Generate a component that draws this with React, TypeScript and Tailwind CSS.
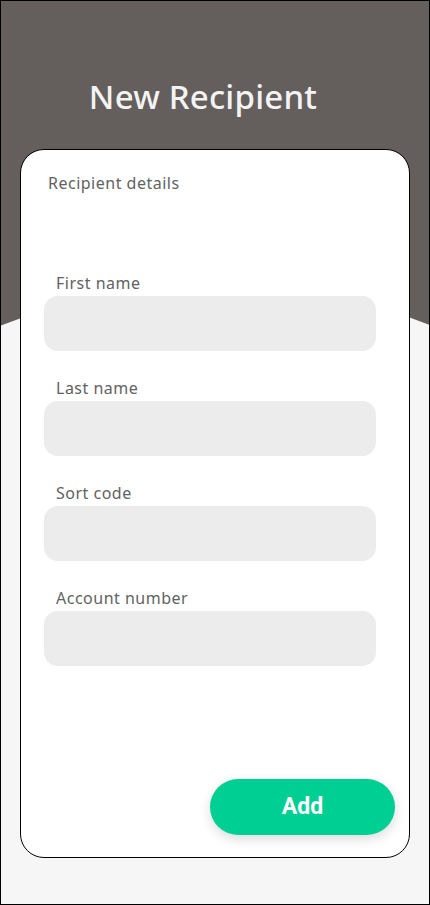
import React from 'react';

const fields = ['First name', 'Last name', 'Sort code', 'Account number'];

function Field({ label }: { label: string }) {
  return (
    <div className="flex flex-col">
      <label className="pl-[35px] mb-[3px] text-[16px] leading-5 tracking-[0.5px] text-[#626262]">{label}</label>
      <input
        type="text"
        className="ml-[23px] w-[332px] h-[55px] rounded-[14px] bg-[#ececec] outline-none px-4"
        aria-label={label}
      />
    </div>
  );
}

export default function App() {
  return (
    <div
      className="relative w-[430px] h-[905px] overflow-hidden border border-black bg-[#f6f6f6]"
      style={{ fontFamily: '"Noto Sans", "Open Sans", sans-serif' }}
    >
      {/* Header background with curved bottom */}
      <svg className="absolute left-0 top-0" width="430" height="340" viewBox="0 0 430 340">
        <path d="M-1 -1 H431 V325 Q215 239 -1 325 Z" fill="#645e5d" />
      </svg>

      <div className="relative flex flex-col">
        <h1 className="pt-[74px] h-[148px] text-center pr-[24px] text-[33px] leading-[44px] font-medium text-[#f3f3f3] tracking-[0.2px]">
          New Recipient
        </h1>

        <div className="mx-[19px] h-[709px] rounded-[24px] border border-black bg-white flex flex-col">
          <p className="pt-[23px] pl-[27px] text-[16px] leading-5 tracking-[0.5px] text-[#626262]">Recipient details</p>

          <div className="mt-[80px] flex flex-col gap-[27px]">
            {fields.map((f) => (
              <Field key={f} label={f} />
            ))}
          </div>

          <div className="mt-auto mb-[22px] flex justify-end pr-[14px]">
            <button
              className="w-[185px] h-[56px] rounded-full bg-[#00cf93] text-white text-[23px] font-bold shadow-[0_4px_12px_rgba(0,0,0,0.14)]"
              style={{ fontFamily: 'Roboto, sans-serif' }}
            >
              Add
            </button>
          </div>
        </div>
      </div>
    </div>
  );
}
